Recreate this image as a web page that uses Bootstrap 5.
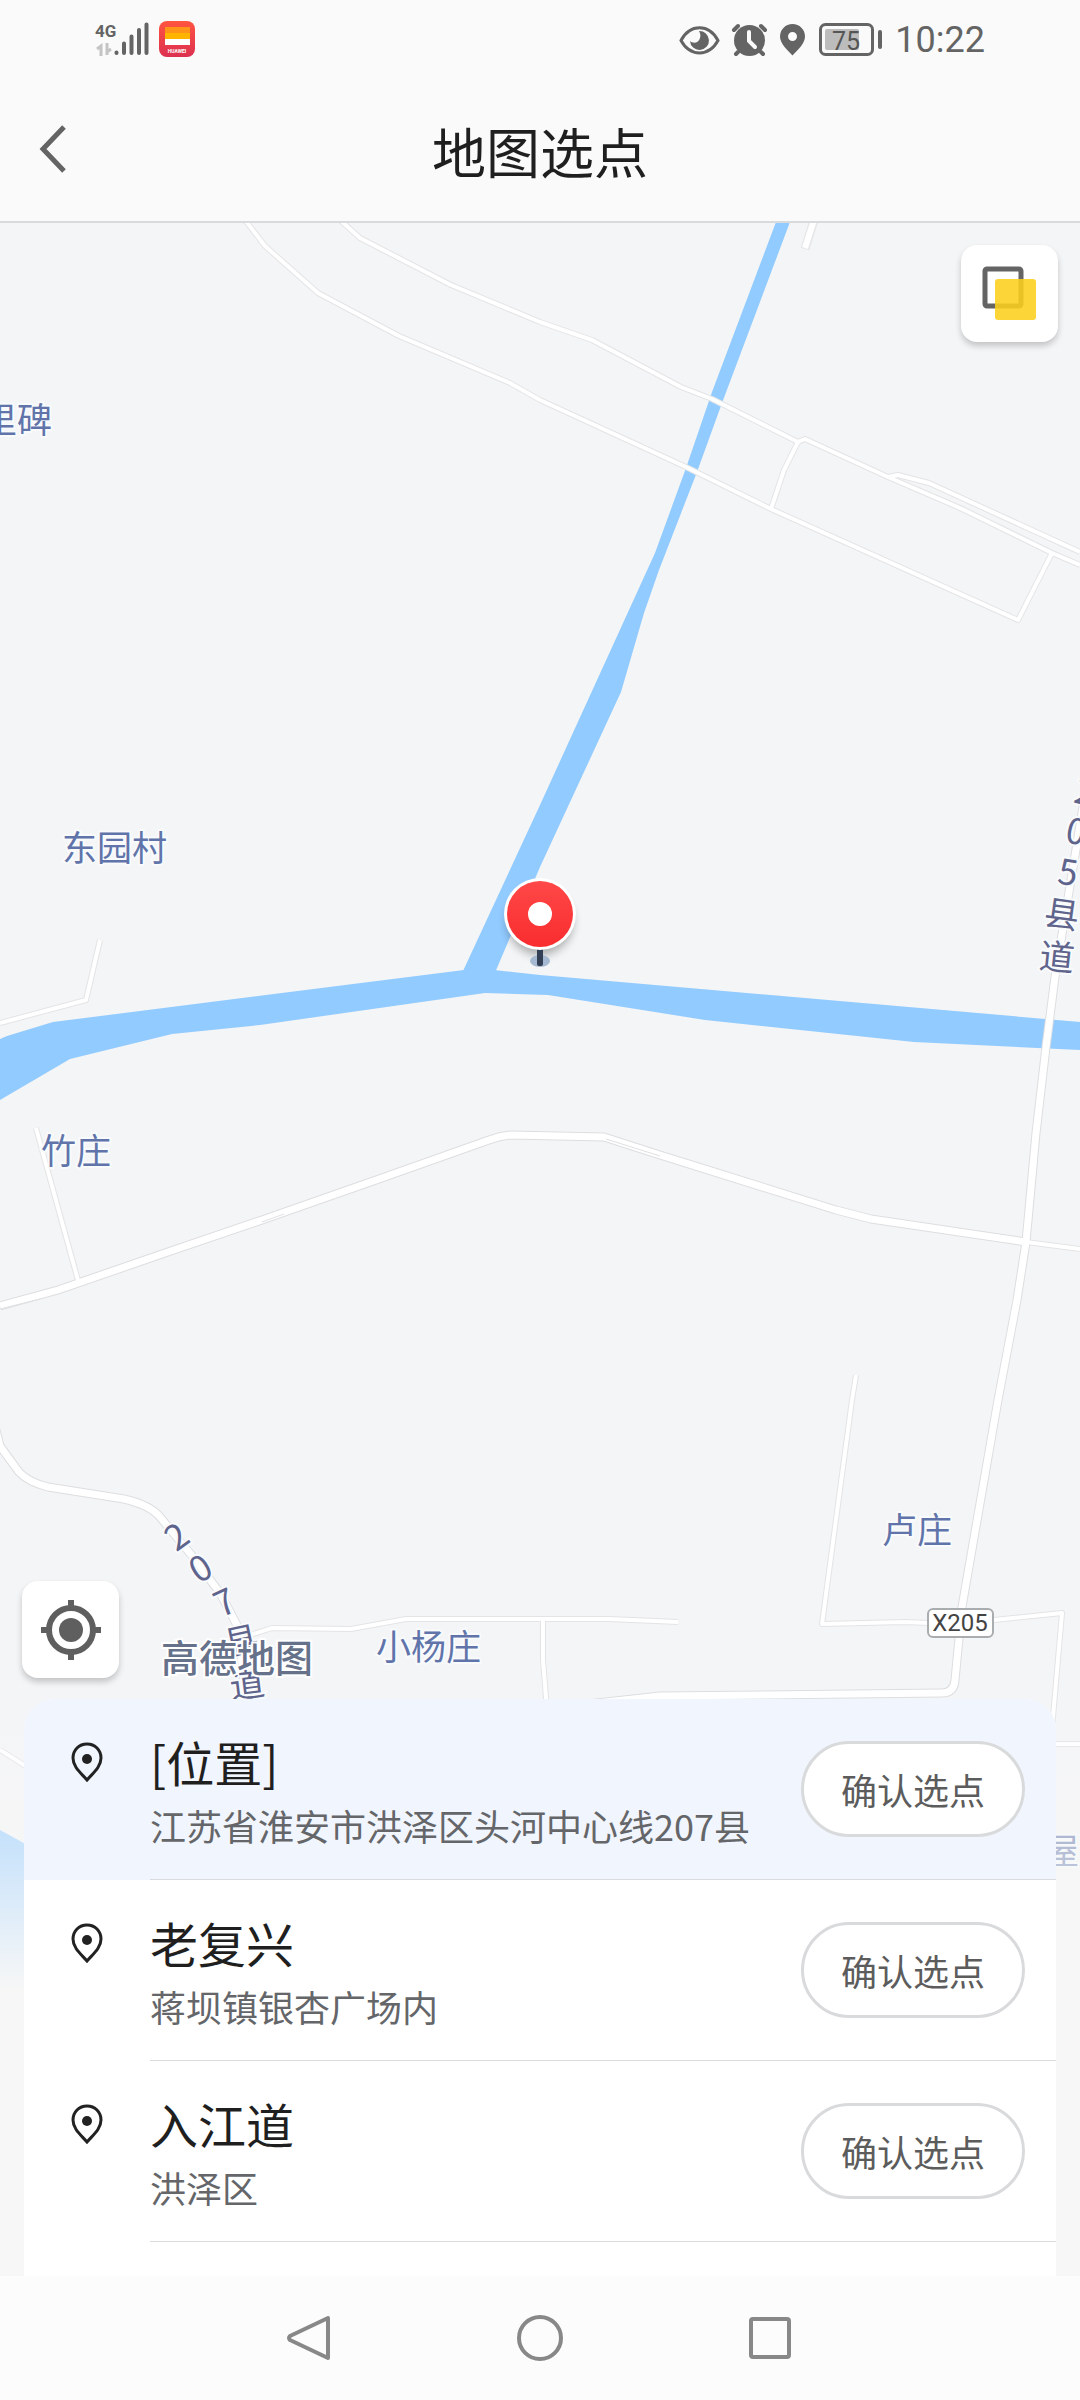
<!DOCTYPE html>
<html lang="zh-CN">
<head>
<meta charset="utf-8">
<meta name="viewport" content="width=device-width, initial-scale=1">
<title>地图选点</title>
<link href="https://cdn.jsdelivr.net/npm/bootstrap@5.3.0/dist/css/bootstrap.min.css" rel="stylesheet">
<style>
  body { font-family: "Noto Sans CJK SC", "Noto Sans", sans-serif; background: #fafafa; color: #1f1f1f; }
  svg { display: block; flex-shrink: 0; }
  .status-bar { height: 80px; padding: 0 95px; color: #646464; }
  .status-icons { gap: 12px; }
  .status-time { font: 36px/40px Roboto, sans-serif; }
  .title-bar { height: 143px; border-bottom: 2px solid #d8dadb; }
  .title-bar h1 { font-size: 54px; line-height: 64px; font-weight: 400; }
  .side-cell { width: 120px; }
  .back-btn { padding: 0 0 4px 38px; }
  .map-area { background: #f4f5f6; }
  .map-canvas { position: absolute; inset: 0; width: 100%; height: 100%; }
  .map-tool { width: 97px; height: 97px; border-radius: 16px; background: #fff; box-shadow: 0 4px 6px rgba(0,0,0,.2); z-index: 1; }
  .tool-layers { margin: 22px 22px 0 0; }
  .tool-locate { margin: 0 0 21px 22px; }
  .place-sheet { margin: 0 24px; padding-bottom: 34px; background: #fff; border-radius: 30px 30px 0 0; z-index: 1; }
  .place-icon { width: 126px; padding: 43px 0 0 47px; }
  .place-body { border-bottom: 1px solid #d9dbdd; padding: 30px 31px 30px 0; }
  .place-name { font-size: 48px; line-height: 64px; font-weight: 400; }
  .place-addr { font-size: 36px; line-height: 48px; margin-top: 8px; color: #646669; }
  .place-current { background: #f1f5fd; }
  .pick-btn { width: 224px; height: 96px; border: 3px solid #d9dadc; border-radius: 48px; background: #fff; color: #5c5c5c; font-size: 36px; line-height: 48px; padding: 0; flex-shrink: 0; }
  .nav-strip { height: 124px; background: #fcfcfc; }
  .nav-key { width: 230px; height: 100%; }
  .thin-case { stroke: #e3e4e6; stroke-width: 6px; }
  .thin-fill { stroke: #fff; stroke-width: 4px; }
  .road-case { stroke: #dddee1; stroke-width: 9px; }
  .road-fill { stroke: #fff; stroke-width: 7px; }
  .village { font-size: 35px; fill: #6074aa; paint-order: stroke; stroke: #f8fafc; stroke-width: 4px; }
  .road-name { font-size: 35px; fill: #5f648c; text-anchor: middle; paint-order: stroke; stroke: #f8fafc; stroke-width: 4px; }
  .watermark { font-size: 38px; font-weight: 500; fill: #66718a; paint-order: stroke; stroke: #fff; stroke-width: 4px; }
</style>
<script src="https://cdn.jsdelivr.net/npm/bootstrap@5.3.0/dist/js/bootstrap.bundle.min.js"></script>
</head>
<body>
<div class="d-flex flex-column min-vh-100">

  <div class="status-bar d-flex align-items-center justify-content-between">
    <div class="d-flex align-items-center">
      <svg width="101" height="40" viewBox="95 20 101 40" role="img" aria-label="4G 信号">
        <text x="95" y="37" font-family="Roboto, sans-serif" font-size="17" font-weight="700" fill="#646464">4G</text>
        <g fill="none" stroke="#c4c4c4" stroke-width="3"><path d="M97 49l4-3v10"/><path d="M107 43v12M107 52l4-3"/></g>
        <g stroke="#646464" stroke-width="4" stroke-linecap="round"><path d="M116.500 52.500v.5M124 43.500v9.500M131.500 36.500v16.500M139 30v23M146.500 24.500v28.500"/></g>
        <defs>
          <linearGradient id="appRed" x1="0" y1="0" x2="0" y2="1"><stop offset="0" stop-color="#ff5440"/><stop offset="1" stop-color="#dc3052"/></linearGradient>
        </defs>
        <rect x="159" y="21" width="36" height="36" rx="8" fill="url(#appRed)"/>
        <rect x="165" y="27" width="25" height="6" fill="#ff9419"/>
        <rect x="165" y="33" width="25" height="6" fill="#ffb400"/>
        <rect x="165" y="39" width="25" height="6" fill="#fff"/>
        <text x="177" y="53" text-anchor="middle" font-family="Roboto, sans-serif" font-size="5" font-weight="700" fill="#fff">HUAWEI</text>
      </svg>
    </div>
    <div class="status-icons d-flex align-items-center">
      <svg width="204" height="40" viewBox="678 20 204 40" role="img" aria-label="护眼 闹钟 定位 电量">
        <path d="M680 40.500C689 23.500 708 23.500 717 40.500C708 57 689 57 680 40.500Z" fill="none" stroke="#646464" stroke-width="3"/>
        <path d="M698 31a9.500 9.500 0 1 1-9 10c3 3 9 2 10-3 1-3 0-5-1-7z" fill="#646464"/>
        <circle cx="748.500" cy="40.500" r="15.500" fill="#646464"/>
        <g fill="none" stroke="#646464" stroke-width="4" stroke-linecap="round"><path d="M733 30l4-4M764 30l-4-4M737 52l-2 2M760 52l2 2"/></g>
        <path d="M748 32v9l6 6" fill="none" stroke="#fafafa" stroke-width="4" stroke-linecap="round"/>
        <path fill-rule="evenodd" d="M791.500 24c7 0 12.500 5.500 12.500 12.500 0 7-7 13-12.500 19-5.500-6-12.500-12-12.500-19C779 29.500 784.500 24 791.500 24zm0 8a4 4 0 1 0 0 9 4 4 0 1 0 0-9z" fill="#646464"/>
        <rect x="819.500" y="24.500" width="52" height="30" rx="5" fill="none" stroke="#646464" stroke-width="3"/>
        <rect x="824" y="29" width="34" height="21" rx="2" fill="#bcbcbc"/>
        <rect x="877" y="30" width="4" height="19" rx="2" fill="#646464"/>
        <text x="845" y="50" text-anchor="middle" font-family="Roboto, sans-serif" font-size="25" fill="#555">75</text>
      </svg>
      <span class="status-time">10:22</span>
    </div>
  </div>

  <header class="title-bar d-flex align-items-center justify-content-between">
    <div class="side-cell">
      <button type="button" class="back-btn btn border-0" aria-label="返回">
        <svg width="30" height="50" viewBox="0 0 30 50"><path d="M26 3L5 25L26 47" fill="none" stroke="#646464" stroke-width="5"/></svg>
      </button>
    </div>
    <h1 class="m-0">地图选点</h1>
    <div class="side-cell"></div>
  </header>

  <main class="map-area flex-grow-1 d-flex flex-column position-relative overflow-hidden">
    <svg class="map-canvas" viewBox="0 223 1080 2053" preserveAspectRatio="xMidYMin slice">
      <defs>
        <linearGradient id="fade" x1="0" y1="0" x2="0" y2="1">
          <stop offset="0" stop-color="#f7f7f7" stop-opacity="0"/><stop offset="0.45" stop-color="#f7f7f7" stop-opacity=".5"/><stop offset="1" stop-color="#f7f7f7"/>
        </linearGradient>
        <linearGradient id="pinRed" x1="0" y1="0" x2="0" y2="1"><stop offset="0" stop-color="#ff4848"/><stop offset="1" stop-color="#f92c2e"/></linearGradient>
        <filter id="soft" x="-50%" y="-50%" width="200%" height="200%"><feGaussianBlur stdDeviation="5"/></filter>
        <g id="thinRoads">
          <path d="M245 220L265 246L318 293L399 336L510 383L540 400L588 422L686 467L771 509L1018 620L1052 553"/>
          <path d="M340 220L360 238L451 285L540 322L592 340L681 387L712 399L798 442L805 439L888 477L960 508L1052 553L1080 565"/>
          <path d="M888 477L898 475L929 483L1080 552"/>
          <path d="M798 442L784 470L771 509"/>
          <path d="M0 1023L86 1000L100 940"/>
          <path d="M36 1128L79 1284"/>
          <path d="M1026 1242L1080 1249"/>
          <path d="M856 1375L852 1400L822 1624L905 1622L929 1623M994 1620L1062 1613L1051 1740M1045 1744H1080"/>
          <path d="M543 1620V1660L547 1710"/>
          <path d="M250 1635L272 1628L351 1629L406 1619H609L678 1622"/>
          <path d="M0 1750L40 1775"/>
        </g>
        <g id="mainRoads">
          <path d="M0 1306L58 1290L165 1253L262 1220L379 1179L489 1140Q500 1136 511 1135L604 1137L660 1155L836 1210L871 1219L1026 1242"/>
          <path d="M1094 740L1055 977L1046 1047L1036 1133L1026 1242L1017 1300L998 1400L962 1607L955 1680Q954 1693 942 1693L660 1696L588 1704"/>
          <path d="M-4 1430L0 1446L19 1472Q28 1482 48 1487L124 1499Q150 1505 160 1517L193 1557L220 1593L238 1627L247 1710"/>
        </g>
      </defs>

      <g fill="#92cbff">
        <path d="M776 222L712 392L686 468L655 553L540 805L463 971L494 975L540 867L621 692L644 613L659 570L697 472L722 403L790 222Z"/>
        <path d="M0 1039L7 1036L53 1022L464 970H494L540 975L1080 1022V1050L914 1042L705 1020L548 995L485 993L260 1025L172 1034L70 1059L0 1100Z"/>
        <path d="M0 1830L40 1852V2277H0Z"/>
      </g>
      <g fill="none" stroke-linejoin="round">
        <path d="M814 220L805 249" stroke="#e6e7e9" stroke-width="9"/>
        <path d="M814 220L805 248" stroke="#fff" stroke-width="6"/>
        <use class="thin-case" href="#thinRoads"/>
        <use class="road-case" href="#mainRoads"/>
        <use class="thin-fill" href="#thinRoads"/>
        <use class="road-fill" href="#mainRoads"/>
        <path d="M0 1309L40 1299M262 1222L284 1214M606 1139L660 1156" stroke="#dfe0e2"/>
      </g>

      <text class="village" x="-18" y="433">里碑</text>
      <text class="village" x="62" y="861">东园村</text>
      <text class="village" x="41" y="1164">竹庄</text>
      <text class="village" x="882" y="1543">卢庄</text>
      <text class="village" x="376" y="1660">小杨庄</text>
      <text class="village" x="1044" y="1864">屋</text>

      <g class="road-name">
        <text transform="translate(1085 793) rotate(15)" y="12">2</text>
        <text transform="translate(1076 832) rotate(12)" y="12">0</text>
        <text transform="translate(1068 873) rotate(9)" y="12">5</text>
        <text transform="translate(1062 914) rotate(8)" y="13">县</text>
        <text transform="translate(1057 957) rotate(6)" y="13">道</text>
        <text transform="translate(177 1537) rotate(-36)" y="12">2</text>
        <text transform="translate(201 1569) rotate(-32)" y="12">0</text>
        <text transform="translate(225 1603) rotate(-25)" y="12">7</text>
        <text transform="translate(241 1641) rotate(-12)" y="13">县</text>
        <text transform="translate(247 1684) rotate(-7)" y="13">道</text>
      </g>
      <text class="watermark" x="161" y="1672">高德地图</text>

      <rect x="928" y="1609" width="65" height="28" rx="5" fill="#fff" stroke="#a9adb0" stroke-width="2"/>
      <text x="960" y="1631" text-anchor="middle" font-family="Roboto, sans-serif" font-size="24" fill="#444">X205</text>

      <rect x="0" y="1700" width="1080" height="290" fill="url(#fade)"/>
      <rect x="0" y="1990" width="1080" height="300" fill="#f7f7f7"/>

      <circle cx="540" cy="922" r="33" fill="#000" opacity=".3" filter="url(#soft)"/>
      <ellipse cx="540" cy="961" rx="10" ry="6" fill="#a5b9d2"/>
      <rect x="537" y="946" width="6" height="20" rx="2" fill="#323f55"/>
      <circle cx="540" cy="914" r="36" fill="#fff"/>
      <circle cx="540" cy="914" r="33" fill="url(#pinRed)"/>
      <circle cx="540" cy="914" r="12" fill="#fff"/>
    </svg>

    <button type="button" class="map-tool tool-layers btn border-0 p-0 align-self-end d-flex align-items-center justify-content-center" aria-label="图层">
      <svg width="55" height="55" viewBox="0 0 55 55">
        <rect x="3" y="3" width="36" height="37" rx="2" fill="none" stroke="#646464" stroke-width="5"/>
        <rect x="13" y="13" width="41" height="41" rx="3" fill="#fccf1e" fill-opacity=".88"/>
      </svg>
    </button>

    <button type="button" class="map-tool tool-locate btn border-0 p-0 mt-auto align-self-start d-flex align-items-center justify-content-center" aria-label="定位">
      <svg width="60" height="60" viewBox="0 0 60 60" fill="none" stroke="#5f5f5f" stroke-width="6">
        <circle cx="30" cy="30" r="22"/><path d="M30 0V9M30 51V60M0 30H9M51 30H60"/>
        <circle cx="30" cy="30" r="12" fill="#5f5f5f" stroke="none"/>
      </svg>
    </button>

    <ul class="place-sheet list-unstyled mb-0 overflow-hidden">
      <li class="place-current d-flex">
        <div class="place-icon flex-shrink-0">
          <svg width="32" height="40" viewBox="0 0 32 40"><path d="M16 2C8 2 2 8 2 16c0 9 8 15 14 22 6-7 14-13 14-22C30 8 24 2 16 2z" fill="none" stroke="#222" stroke-width="3"/><circle cx="16" cy="17" r="5" fill="#222"/></svg>
        </div>
        <div class="place-body flex-grow-1 d-flex align-items-center justify-content-between">
          <div><h2 class="place-name m-0">[位置]</h2><div class="place-addr">江苏省淮安市洪泽区头河中心线207县</div></div>
          <button type="button" class="pick-btn btn">确认选点</button>
        </div>
      </li>
      <li class="d-flex">
        <div class="place-icon flex-shrink-0">
          <svg width="32" height="40" viewBox="0 0 32 40"><path d="M16 2C8 2 2 8 2 16c0 9 8 15 14 22 6-7 14-13 14-22C30 8 24 2 16 2z" fill="none" stroke="#222" stroke-width="3"/><circle cx="16" cy="17" r="5" fill="#222"/></svg>
        </div>
        <div class="place-body flex-grow-1 d-flex align-items-center justify-content-between">
          <div><h2 class="place-name m-0">老复兴</h2><div class="place-addr">蒋坝镇银杏广场内</div></div>
          <button type="button" class="pick-btn btn">确认选点</button>
        </div>
      </li>
      <li class="d-flex">
        <div class="place-icon flex-shrink-0">
          <svg width="32" height="40" viewBox="0 0 32 40"><path d="M16 2C8 2 2 8 2 16c0 9 8 15 14 22 6-7 14-13 14-22C30 8 24 2 16 2z" fill="none" stroke="#222" stroke-width="3"/><circle cx="16" cy="17" r="5" fill="#222"/></svg>
        </div>
        <div class="place-body flex-grow-1 d-flex align-items-center justify-content-between">
          <div><h2 class="place-name m-0">入江道</h2><div class="place-addr">洪泽区</div></div>
          <button type="button" class="pick-btn btn">确认选点</button>
        </div>
      </li>
    </ul>
  </main>

  <nav class="nav-strip d-flex justify-content-center" aria-label="系统导航">
    <button type="button" class="nav-key btn border-0 p-0 d-flex align-items-center justify-content-center" aria-label="后退">
      <svg width="48" height="48" viewBox="0 0 48 48"><path d="M42 4V44L4 26Q2 24 4 22Z" fill="none" stroke="#888" stroke-width="4" stroke-linejoin="round"/></svg>
    </button>
    <button type="button" class="nav-key btn border-0 p-0 d-flex align-items-center justify-content-center" aria-label="主屏幕">
      <svg width="48" height="48" viewBox="0 0 48 48"><circle cx="24" cy="24" r="21" fill="none" stroke="#888" stroke-width="4"/></svg>
    </button>
    <button type="button" class="nav-key btn border-0 p-0 d-flex align-items-center justify-content-center" aria-label="最近任务">
      <svg width="48" height="48" viewBox="0 0 48 48"><rect x="5" y="5" width="38" height="38" rx="2" fill="none" stroke="#888" stroke-width="4"/></svg>
    </button>
  </nav>
</div>
</body>
</html>
